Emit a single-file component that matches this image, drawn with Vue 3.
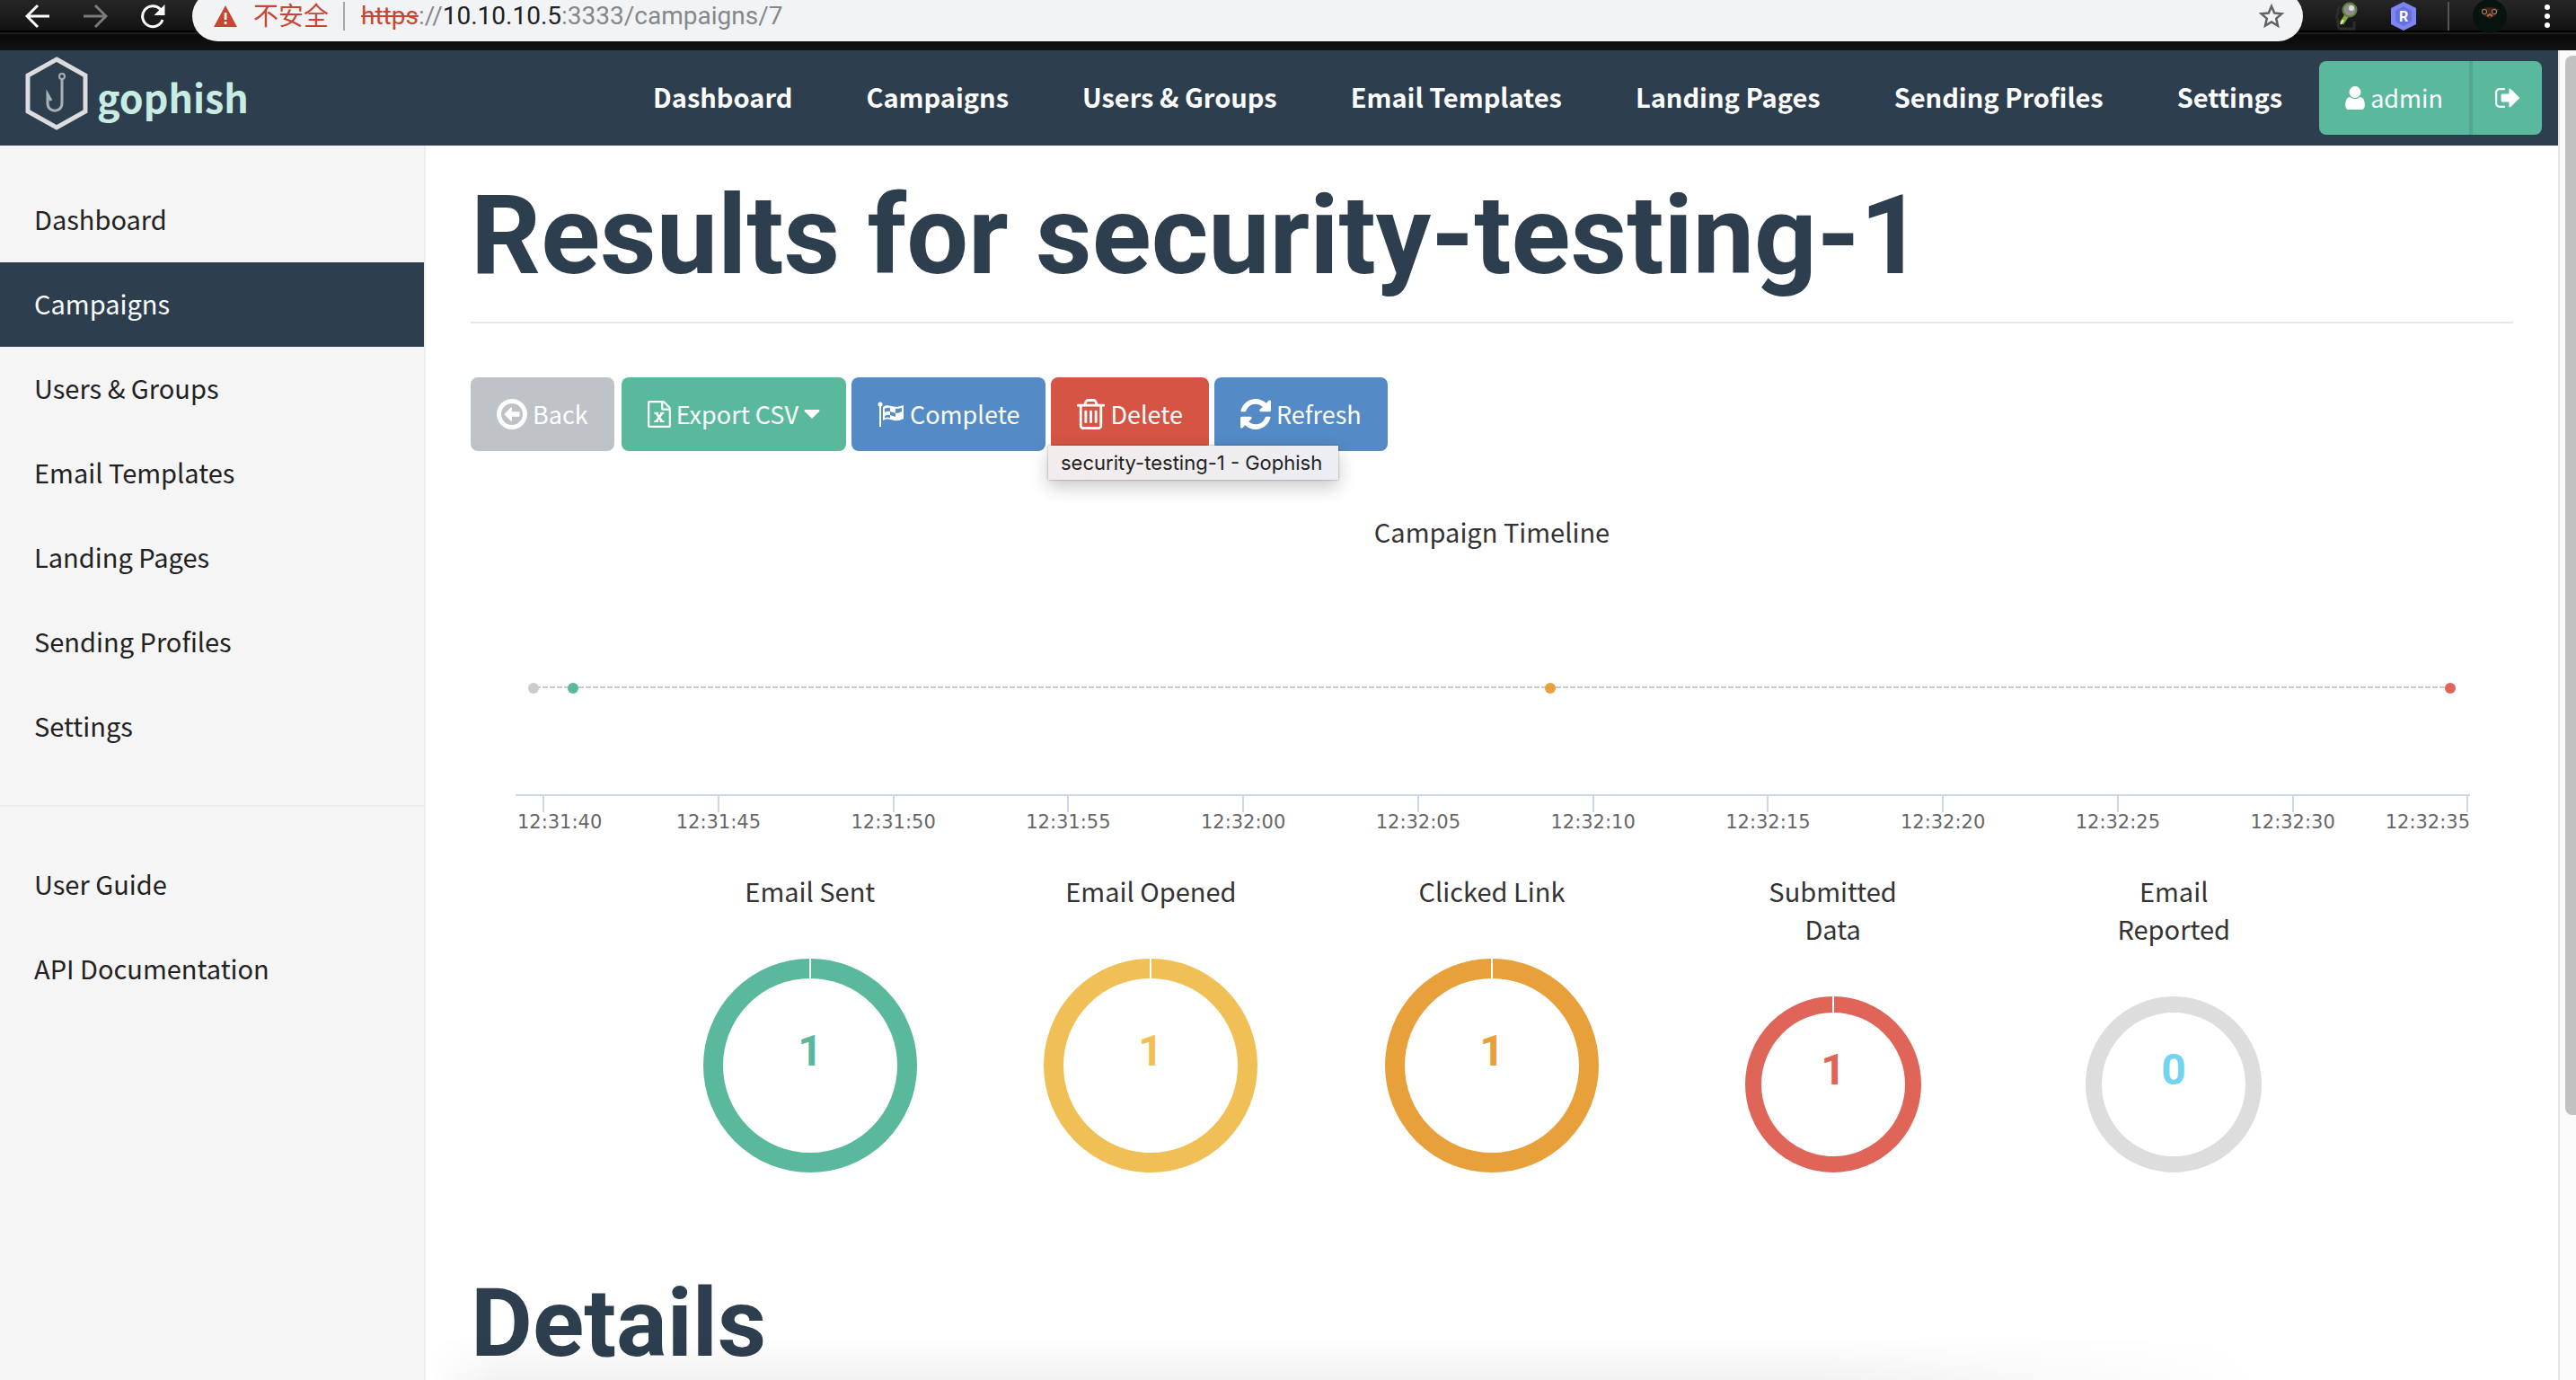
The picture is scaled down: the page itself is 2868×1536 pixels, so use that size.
<script setup>
const navItems = ['Dashboard', 'Campaigns', 'Users & Groups', 'Email Templates', 'Landing Pages', 'Sending Profiles', 'Settings']
const sideHelp = ['User Guide', 'API Documentation']

const events = [
  { at: 0.92, color: '#cccccc' },
  { at: 2.94, color: '#5ab99d' },
  { at: 52.94, color: '#e8a03b' },
  { at: 98.99, color: '#df6558' },
]

const times = ['12:31:40', '12:31:45', '12:31:50', '12:31:55', '12:32:00', '12:32:05', '12:32:10', '12:32:15', '12:32:20', '12:32:25', '12:32:30', '12:32:35']
const ticks = times.map((label, i) => ({ label, at: 1.43 + i * 8.95 }))

const stats = [
  { title: 'Email Sent', value: 1, ring: '#5ab99d', text: '#5ab99d', size: 238, full: true },
  { title: 'Email Opened', value: 1, ring: '#f0c056', text: '#f0c056', size: 238, full: true },
  { title: 'Clicked Link', value: 1, ring: '#e8a03b', text: '#e8a03b', size: 238, full: true },
  { title: 'Submitted Data', value: 1, ring: '#df6558', text: '#df6558', size: 196, full: true },
  { title: 'Email Reported', value: 0, ring: '#dddddd', text: '#72d4ee', size: 196, full: false },
]
const band = (s) => Math.round(s.size * 0.093)
</script>

<template>
  <div class="window">
    <div class="browser">
      <button class="tool back" aria-label="Back">
        <svg width="28" height="28" viewBox="0 0 28 28"><path d="M27 14H3M14 2 2 14l12 12" fill="none" stroke="#fff" stroke-width="3" /></svg>
      </button>
      <button class="tool forward" aria-label="Forward">
        <svg width="28" height="28" viewBox="0 0 28 28"><path d="M1 14h24M14 2l12 12-12 12" fill="none" stroke="#7b7b7b" stroke-width="3" /></svg>
      </button>
      <button class="tool reload" aria-label="Reload">
        <svg width="28" height="28" viewBox="0 0 28 28"><path d="M25 18A11.500 11.500 0 1 1 22.500 6.200" fill="none" stroke="#fff" stroke-width="3" /><path d="M27.500 1v12h-12z" fill="#fff" /></svg>
      </button>
      <div class="address">
        <svg class="warn" width="26" height="24" viewBox="0 0 26 24"><path d="M13 0 26 24H0z" fill="#cb4632" /><path d="M11.700 8h2.800v8h-2.800zM11.700 18h2.800v3h-2.800z" fill="#f1f3f5" /></svg>
        <span class="insecure">不安全</span>
        <span class="bar"></span>
        <span class="url"><s>https</s>://<b>10.10.10.5</b>:3333/campaigns/7</span>
        <button class="star" aria-label="Bookmark">
          <svg width="30" height="30" viewBox="0 0 24 24"><path d="m12 3.200 2.600 6 6.500.6-4.900 4.300 1.400 6.400L12 17.100l-5.600 3.400 1.400-6.400-4.900-4.300 6.500-.6z" fill="none" stroke="#5f6368" stroke-width="2" /></svg>
        </button>
      </div>
      <div class="extensions">
        <svg width="26" height="32" viewBox="0 0 26 32"><path d="M6 6c-4 0-3 4-3 7l-2 4 2 3c0 5-1 10 4 10h14v-8" fill="none" stroke="#2c2c2c" stroke-width="3" /><path d="m13 15-6 9" stroke="#7da83e" stroke-width="5" /><path d="m9 20-3 5" stroke="#e4ecd2" stroke-width="2" /><circle cx="16" cy="9" r="7.500" fill="#8b8f94" stroke="#5c8130" stroke-width="2" /><circle cx="18" cy="7" r="3" fill="#d8dadd" /></svg>
        <svg width="30" height="34" viewBox="0 0 30 34"><path d="m15 1 14 7v18l-14 7-14-7V8z" fill="#7d86f0" /><path d="m15 6 9 5v12l-9 5-9-5V11z" fill="#6670dc" /><text x="15" y="23" text-anchor="middle" class="ext-letter">R</text></svg>
        <span class="ext-bar"></span>
        <svg width="40" height="40" viewBox="0 0 40 40"><circle cx="20" cy="20" r="19" fill="#07130f" /><path d="M10 12q10-4 20 0l-3 7-7 4-7-4z" fill="#3a2518" /><circle cx="14" cy="15" r="3" fill="#a98c5c" /><circle cx="25" cy="15" r="3" fill="#a98c5c" /><circle cx="14" cy="15" r="2" fill="#111" /><circle cx="25" cy="15" r="2" fill="#111" /><path d="m17 20 3-2 3 2" fill="none" stroke="#b36f4a" stroke-width="2" /></svg>
        <svg width="8" height="28" viewBox="0 0 8 28"><g fill="#fff"><circle cx="4" cy="4" r="3" /><circle cx="4" cy="14" r="3" /><circle cx="4" cy="24" r="3" /></g></svg>
      </div>
    </div>

    <div class="viewport">
      <div class="page">
        <header class="navbar">
          <a class="brand" href="#">
            <svg width="70" height="82" viewBox="0 0 70 82"><path d="M35 3 67 21v40L35 79 3 61V21z" fill="none" stroke="#dcdcde" stroke-width="5" /><circle cx="41" cy="22" r="3" fill="none" stroke="#a9b0b8" stroke-width="2" /><path d="M41 25v27c0 11-16 11-16 0V42l4 7" fill="none" stroke="#a9b0b8" stroke-width="3" /></svg>
            <span>gophish</span>
          </a>
          <nav class="links">
            <a v-for="item in navItems" :key="item" href="#">{{ item }}</a>
          </nav>
          <div class="account">
            <button class="btn user">
              <svg width="22" height="26" viewBox="256 128 1280 1536"><path fill="#fff" d="M1536 1399q0 109-62.500 187t-150.500 78h-854q-88 0-150.500-78t-62.500-187q0-85 8.500-160.500t31.500-152 58.500-131 94-89 134.500-34.500q131 128 313 128t313-128q76 0 134.500 34.500t94 89 58.500 131 31.500 152 8.500 160.500zm-256-887q0 159-112.500 271.500t-271.500 112.500-271.500-112.500-112.500-271.500 112.500-271.500 271.500-112.500 271.500 112.500 112.500 271.500z" /></svg>
              admin
            </button>
            <button class="btn signout" aria-label="Sign out">
              <svg width="27" height="22" viewBox="64 256 1568 1280"><path fill="#fff" d="M704 1440q0 4 1 20t.5 26.500-3 23.500-10 19.500-20.500 6.500h-320q-119 0-203.500-84.500t-84.500-203.500v-704q0-119 84.500-203.500t203.500-84.500h320q13 0 22.500 9.500t9.500 22.500q0 4 1 20t.5 26.500-3 23.500-10 19.500-20.500 6.500h-320q-66 0-113 47t-47 113v704q0 66 47 113t113 47h312l11.500 1 11.500 3 8 5.500 7 9 2 13.500zm928-544q0 26-19 45l-544 544q-19 19-45 19t-45-19-19-45v-288h-448q-26 0-45-19t-19-45v-384q0-26 19-45t45-19h448v-288q0-26 19-45t45-19 45 19l544 544q19 19 19 45z" /></svg>
            </button>
          </div>
        </header>

        <div class="body">
          <aside class="sidebar">
            <a v-for="item in navItems" :key="item" href="#" :class="{ active: item === 'Campaigns' }">{{ item }}</a>
            <hr />
            <a v-for="item in sideHelp" :key="item" href="#">{{ item }}</a>
          </aside>

          <main class="content">
            <h1>Results for security-testing-1</h1>

            <div class="actions">
              <button class="btn grey">
                <svg width="34" height="34" viewBox="128 128 1536 1536"><path fill="#fff" d="M1280 800v192q0 13-9.500 22.500t-22.500 9.500h-352v192q0 14-9 23t-23 9q-12 0-24-10l-319-319q-9-9-9-23t9-23l320-320q9-9 23-9 13 0 22.500 9.500t9.500 22.500v192h352q13 0 22.500 9.500t9.500 22.500zm160 96q0-148-73-273t-198-198-273-73-273 73-198 198-73 273 73 273 198 198 273 73 273-73 198-198 73-273zm224 0q0 209-103 385.500t-279.500 279.500-385.500 103-385.500-103-279.500-279.500-103-385.500 103-385.500 279.500-279.500 385.500-103 385.500 103 279.500 279.500 103 385.500z" /></svg>
                Back
              </button>
              <button class="btn green">
                <svg width="26" height="30" viewBox="128 0 1536 1792"><path fill="#fff" d="M1596 380q28 28 48 76t20 88v1152q0 40-28 68t-68 28h-1344q-40 0-68-28t-28-68v-1600q0-40 28-68t68-28h896q40 0 88 20t76 48zm-444-244v376h376q-10-29-22-41l-313-313q-12-12-41-22zm384 1528v-1024h-416q-40 0-68-28t-28-68v-416h-768v1536h1280z" /><path d="m690 820 400 570M1090 820l-400 570" fill="none" stroke="#fff" stroke-width="150" /><path d="M560 822h280M950 822h270M550 1378h290M940 1378h290" stroke="#fff" stroke-width="106" /></svg>
                Export CSV
                <svg class="caret" width="18" height="10" viewBox="0 0 18 10"><path d="M1 0h16q1 1 0 2L9 10 1 2Q0 1 1 0z" fill="#fff" /></svg>
              </button>
              <button class="btn blue">
                <svg width="30" height="28" viewBox="0 0 30 28"><circle cx="3" cy="3" r="2.500" fill="#fff" /><path d="M2 3h2v25H2z" fill="#fff" /><path d="M6 6c7-5 10 3 23-2v15c-12 6-15-3-23 2z" fill="#fff" /><path d="M8 8q3-2 6-1v4q-3-1-6 1zM14 11q3 1 6 2v4q-3-1-6-2zM20 8q4 0 7-1v4q-3 2-7 2zM8 16q3-2 6-1v3q-3-1-6 0z" fill="#548ac6" /></svg>
                Complete
              </button>
              <button class="btn red">
                <svg width="31" height="34" viewBox="192 128 1408 1536"><path fill="#fff" d="M704 736v576q0 14-9 23t-23 9h-64q-14 0-23-9t-9-23v-576q0-14 9-23t23-9h64q14 0 23 9t9 23zm256 0v576q0 14-9 23t-23 9h-64q-14 0-23-9t-9-23v-576q0-14 9-23t23-9h64q14 0 23 9t9 23zm256 0v576q0 14-9 23t-23 9h-64q-14 0-23-9t-9-23v-576q0-14 9-23t23-9h64q14 0 23 9t9 23zm128 724v-948h-896v948q0 22 7 40.500t14.500 27 10.500 8.500h832q3 0 10.500-8.500t14.500-27 7-40.500zm-672-1076h448l-48-117q-7-9-17-11h-317q-10 2-17 11zm928 32v64q0 14-9 23t-23 9h-96v948q0 83-47 143.500t-113 60.500h-832q-66 0-113-58.500t-47-141.500v-952h-96q-14 0-23-9t-9-23v-64q0-14 9-23t23-9h309l70-167q15-37 54-63t79-26h320q40 0 79 26t54 63l70 167h309q14 0 23 9t9 23z" /></svg>
                Delete
              </button>
              <button class="btn blue">
                <svg width="34" height="34" viewBox="128 128 1536 1536"><path fill="#fff" d="M1639 1056q0 5-1 7-64 268-268 434.500t-478 166.500q-146 0-282.500-55t-243.500-157l-129 129q-19 19-45 19t-45-19-19-45v-448q0-26 19-45t45-19h448q26 0 45 19t19 45-19 45l-137 137q71 66 161 102t187 36q134 0 250-65t186-179q11-17 53-117 8-23 30-23h192q13 0 22.500 9.500t9.500 22.500zm25-800v448q0 26-19 45t-45 19h-448q-26 0-45-19t-19-45 19-45l138-138q-148-137-349-137-134 0-250 65t-186 179q-11 17-53 117-8 23-30 23h-199q-13 0-22.500-9.500t-9.500-22.500v-7q65-268 270-434.500t480-166.500q146 0 284 55.500t245 156.500l130-129q19-19 45-19t45 19 19 45z" /></svg>
                Refresh
              </button>
              <div class="tooltip" role="tooltip">security-testing-1 - Gophish</div>
            </div>

            <section class="timeline">
              <h3>Campaign Timeline</h3>
              <div class="plot">
                <div class="dashes"></div>
                <i v-for="e in events" :key="e.at" class="dot" :style="{ left: e.at + '%', background: e.color }"></i>
              </div>
              <div class="axis">
                <template v-for="t in ticks" :key="t.label">
                  <i class="tick" :style="{ left: t.at + '%' }"></i>
                  <span class="time" :style="{ left: t.at + '%' }">{{ t.label }}</span>
                </template>
              </div>
            </section>

            <section class="stats">
              <div v-for="s in stats" :key="s.title" class="stat">
                <h3 :class="{ narrow: s.size < 200 }">{{ s.title }}</h3>
                <svg :width="s.size" :height="s.size">
                  <circle :cx="s.size / 2" :cy="s.size / 2" :r="(s.size - band(s)) / 2" fill="none" :stroke="s.ring" :stroke-width="band(s)" />
                  <rect v-if="s.full" :x="s.size / 2 - 1" y="0" width="2" :height="band(s) + 1" fill="#fff" />
                  <text :x="s.size / 2" :y="s.size / 2" text-anchor="middle" class="count" :fill="s.text">{{ s.value }}</text>
                </svg>
              </div>
            </section>

            <h2>Details</h2>
          </main>
        </div>
      </div>
      <div class="scrollbar"><div class="thumb"></div></div>
    </div>
    <div class="shade"></div>
  </div>
</template>

<style>
body {
  margin: 0;
  background: #fff;
}
</style>

<style scoped>
.window {
  position: relative;
  display: flex;
  flex-direction: column;
  height: 100vh;
  overflow: hidden;
  font-family: "Noto Sans CJK SC", "Noto Sans", sans-serif;
  color: #333;
}
a {
  text-decoration: none;
}
button {
  border: 0;
  padding: 0;
  margin: 0;
  background: none;
  font-family: inherit;
}
svg {
  display: block;
  flex: none;
}

/* browser toolbar */
.browser {
  display: flex;
  flex: none;
  height: 56px;
  overflow: hidden;
  background: linear-gradient(#262626, #121212 34px, #000 34px, #000 36px, #1d1d1d 36px, #1d1d1d 38px, #0a0a0a 38px, #121212);
}
.tool {
  width: 64px;
  height: 36px;
  display: flex;
  justify-content: center;
  align-items: center;
}
.back {
  margin-left: 10px;
}
.reload {
  margin-right: 12px;
}
.address {
  flex: 1;
  display: flex;
  align-items: center;
  height: 56px;
  margin-top: -10px;
  padding: 0 20px 0 24px;
  border-radius: 28px;
  background: #f1f3f5;
  font-size: 28px;
  line-height: 36px;
}
.insecure {
  padding-top: 2px;
  margin-left: 18px;
  color: #cb4632;
  font-family: Roboto, "Noto Sans CJK SC", sans-serif;
}
.bar {
  width: 2px;
  height: 32px;
  margin: 0 18px 0 16px;
  background: #a5a7aa;
}
.url {
  flex: 1;
  font-family: Roboto, sans-serif;
  color: #84888c;
}
.url s {
  color: #cb4632;
}
.url b {
  font-weight: 400;
  color: #202124;
}
.extensions {
  display: flex;
  align-items: center;
  height: 36px;
  padding: 0 28px 0 36px;
}
.extensions svg:nth-child(2) {
  margin: 0 34px 0 35px;
}
.ext-bar {
  width: 2px;
  height: 32px;
  margin-right: 25px;
  background: #555;
}
.extensions svg:last-child {
  margin-left: 40px;
}
.ext-letter {
  font: 700 16px Roboto, sans-serif;
  fill: #fff;
}

/* page and scrollbar */
.viewport {
  flex: 1;
  display: flex;
  min-height: 0;
}
.page {
  flex: 1;
  display: flex;
  flex-direction: column;
  min-width: 0;
}
.scrollbar {
  width: 12px;
  padding: 6px 0 0 6px;
  border-left: 2px solid #e6e6e6;
  background: #fafafa;
}
.thumb {
  height: 80%;
  border-radius: 8px 0 0 8px;
  background: #c1c1c1;
}

.navbar {
  display: flex;
  align-items: center;
  flex: none;
  height: 106px;
  padding-right: 18px;
  background: #2d3e4f;
}
.brand {
  display: flex;
  align-items: center;
  margin-left: 28px;
  color: #c8ebe2;
  font-size: 43px;
  font-weight: 700;
  line-height: 48px;
}
.brand svg {
  margin: 0 10px 10px 0;
}
.brand span {
  padding-bottom: 4px;
}
.links {
  display: flex;
  flex: 1;
  justify-content: flex-end;
  padding-bottom: 4px;
}
.links a {
  padding: 0 41px;
  color: #fff;
  font-size: 29px;
  font-weight: 700;
  line-height: 42px;
}
.account {
  display: flex;
}
.btn {
  display: flex;
  align-items: center;
  gap: 6px;
  height: 82px;
  padding: 0 29px;
  border-radius: 8px;
  color: #fff;
  font-size: 27px;
  line-height: 42px;
}
.user {
  border-right: 4px solid #53a691;
  border-radius: 8px 0 0 8px;
  background: #5ab99d;
}
.signout {
  padding: 0 25px;
  border-radius: 0 8px 8px 0;
  background: #5ab99d;
}

.body {
  flex: 1;
  display: flex;
  min-height: 0;
}
.sidebar {
  display: flex;
  flex-direction: column;
  width: 472px;
  flex: none;
  padding-top: 36px;
  border-right: 2px solid #eee;
  background: #f5f5f5;
}
.sidebar a {
  padding: 24px 38px 28px;
  color: #222;
  font-size: 29px;
  line-height: 42px;
}
.sidebar .active {
  background: #2d3e4f;
  color: #fff;
}
.sidebar hr {
  width: 100%;
  margin: 40px 0;
  border: 0;
  border-top: 2px solid #eee;
}

.content {
  flex: 1;
  min-width: 0;
  padding: 34px 50px 0;
}
h1,
h2,
h3 {
  margin: 0;
}
h1,
h2 {
  font-family: Roboto, sans-serif;
  font-weight: 700;
  color: #2d3e4f;
}
h1 {
  padding-bottom: 28px;
  border-bottom: 2px solid #e6e6ee;
  font-size: 122px;
  line-height: 134px;
}
h2 {
  margin-top: 110px;
  font-size: 106px;
  line-height: 116px;
}
h3 {
  font-size: 29px;
  font-weight: 400;
  line-height: 42px;
  text-align: center;
}

.actions {
  position: relative;
  display: flex;
  gap: 6px;
  margin-top: 60px;
}
.grey {
  margin-right: 2px;
  background: #bdc3c6;
}
.green {
  background: #5ab99d;
}
.blue {
  background: #548ac6;
}
.red {
  background: #d55443;
}
.tooltip {
  position: absolute;
  top: 76px;
  left: 643px;
  padding: 0 18px 0 14px;
  background: linear-gradient(90deg, #f3ecec, #eceef3);
  box-shadow: 0 0 2px rgba(0, 0, 0, 0.4), 0 8px 20px rgba(0, 0, 0, 0.22);
  color: #222;
  font-family: Inter, sans-serif;
  font-size: 22px;
  line-height: 38px;
  white-space: nowrap;
}

.timeline {
  margin-top: 68px;
}
.plot {
  position: relative;
  height: 272px;
  margin: 0 48px 0 50px;
}
.dashes {
  position: absolute;
  top: 152px;
  left: 1%;
  right: 1%;
  height: 2px;
  background: repeating-linear-gradient(90deg, #ccc 0 6px, transparent 6px 8px);
}
.dot {
  position: absolute;
  top: 148px;
  width: 12px;
  height: 12px;
  margin-left: -6px;
  border-radius: 50%;
}
.axis {
  position: relative;
  height: 42px;
  margin: 0 48px 0 50px;
  border-top: 2px solid #ccd6eb;
}
.tick {
  position: absolute;
  top: 0;
  width: 2px;
  height: 18px;
  margin-left: -1px;
  background: #ccd6eb;
}
.time {
  position: absolute;
  top: 16px;
  transform: translateX(-50%);
  color: #666;
  font-family: "DejaVu Sans", sans-serif;
  font-size: 21px;
  line-height: 26px;
}
.tick:first-child + .time {
  margin-left: 18px;
}
.time:last-child {
  left: auto !important;
  right: 0;
  transform: none;
}

.stats {
  display: grid;
  grid-template-columns: repeat(5, 1fr);
  align-items: start;
  margin-top: 42px;
  padding: 0 188px;
}
.stat {
  display: flex;
  flex-direction: column;
  align-items: center;
  gap: 55px;
}
.narrow {
  width: 160px;
}
.count {
  font: 700 48px Roboto, sans-serif;
}

/* soft shadow cast along the bottom of the window */
.shade {
  position: absolute;
  right: 12%;
  bottom: 0;
  left: 474px;
  height: 50px;
  background: linear-gradient(transparent, rgba(0, 0, 0, 0.05));
  mask-image: linear-gradient(90deg, transparent, #000 4%, #000 75%, transparent);
}
</style>
